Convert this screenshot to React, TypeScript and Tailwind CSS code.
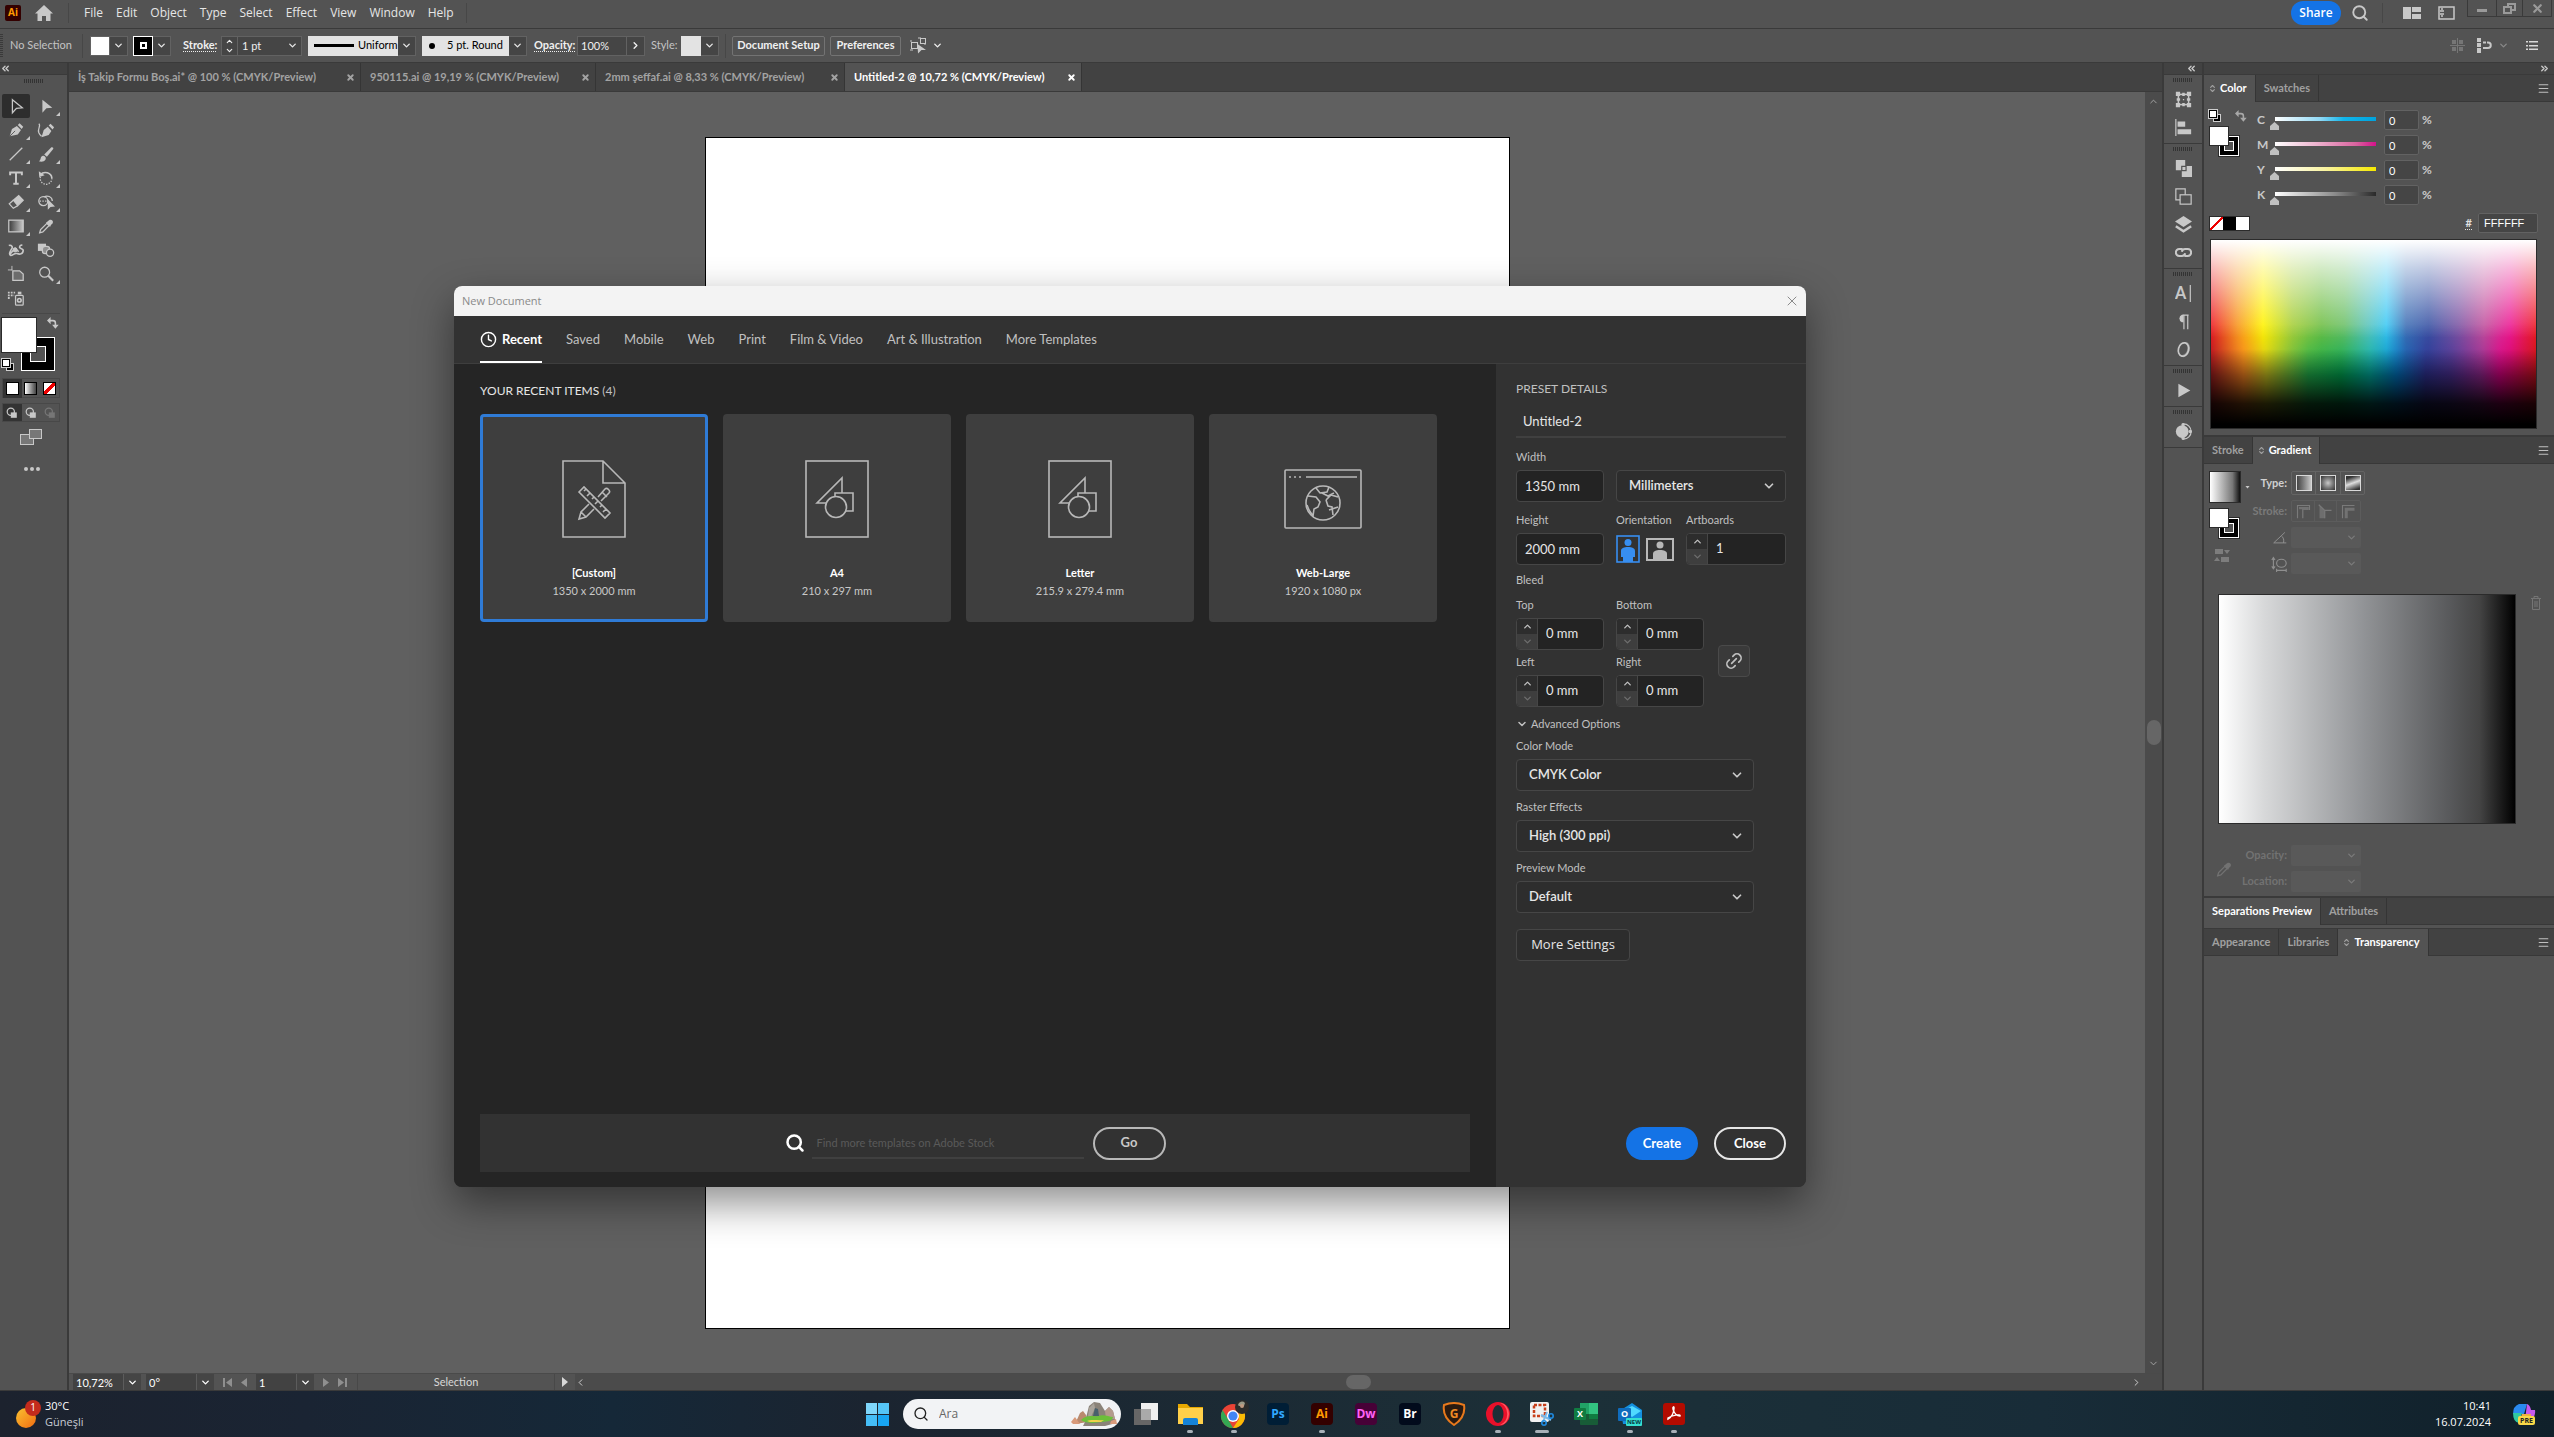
import type { ReactNode } from "react"
import { ChevronDown, ChevronUp, ChevronRight, ChevronLeft, ChevronsLeft, ChevronsRight, ChevronsUpDown, Search, X, Menu, Link2, Clock4 } from "lucide-react"

const menus = ["File", "Edit", "Object", "Type", "Select", "Effect", "View", "Window", "Help"]

const docs = [
  { name: "İş Takip Formu Boş.ai* @ 100 % (CMYK/Preview)", width: "w-[292px]", active: false },
  { name: "950115.ai @ 19,19 % (CMYK/Preview)", width: "w-[235px]", active: false },
  { name: "2mm şeffaf.ai @ 8,33 % (CMYK/Preview)", width: "w-[249px]", active: false },
  { name: "Untitled-2 @ 10,72 % (CMYK/Preview)", width: "w-[237px]", active: true },
]

const presetTabs = ["Saved", "Mobile", "Web", "Print", "Film & Video", "Art & Illustration", "More Templates"]

const presets = [
  { name: "[Custom]", size: "1350 x 2000 mm", kind: "custom" },
  { name: "A4", size: "210 x 297 mm", kind: "art" },
  { name: "Letter", size: "215.9 x 279.4 mm", kind: "art" },
  { name: "Web-Large", size: "1920 x 1080 px", kind: "web" },
]

const channels = [
  { name: "C", track: "bg-[linear-gradient(to_right,#fff,#8fd8f5_45%,#12b5ea_68%,#00a3dd)]" },
  { name: "M", track: "bg-[linear-gradient(to_right,#fff,#eeb5d0_40%,#d9649f_80%,#d3128a)]" },
  { name: "Y", track: "bg-[linear-gradient(to_right,#fff,#f9f3a0_50%,#f5e800)]" },
  { name: "K", track: "bg-[linear-gradient(to_right,#fff,#8a8a8a_60%,#2a2a2a)]" },
]

function Svg({ size = 20, children }: { size?: number; children: ReactNode }) {
  return (
    <svg width={size} height={size} viewBox="0 0 20 20" fill="none" stroke="currentColor" strokeWidth="1.4" aria-hidden="true">
      {children}
    </svg>
  )
}

/* ---------- toolbar ---------- */

const tools: { name: string; more: boolean; icon: ReactNode }[] = [
  { name: "Selection", more: false, icon: <path d="M6 3 L17 12 L10.500 12.500 L6 17.500 Z" /> },
  { name: "Direct Selection", more: true, icon: <path d="M6 3 L17 12 L10.500 12.500 L6 17.500 Z" fill="currentColor" stroke="none" /> },
  { name: "Pen", more: true, icon: <><path d="M3 17 L5.500 9 L11 5.500 L15.500 10 L12 15 Z M12 4.500 L14 2.500 L18 6.500 L16.300 8.800 Z" fill="currentColor" stroke="none" /><path d="M3 17 L9 11" stroke="#535353" strokeWidth="1" /></> },
  { name: "Curvature", more: false, icon: <><path d="M5 18 L7.500 10 L12 6.500 L16 11 L13 15.500 Z M13 5 L15 3 L19 7 L17.300 9.500 Z" fill="currentColor" stroke="none" /><path d="M2 3 C5 5 0 9 2 13 C3 15 4 16 5 17" /></> },
  { name: "Line Segment", more: true, icon: <path d="M3 17 L17 3" /> },
  { name: "Paintbrush", more: true, icon: <><path d="M8 10.500 L16 2.500 C17.500 2 18.500 3 18 4.500 L11 13 Z" fill="currentColor" stroke="none" /><path d="M2 18 C5 17 3 13 6.500 12 C9 12 10.500 14 9.500 16 C8 18.500 5 19 2 18 Z" fill="currentColor" stroke="none" /></> },
  { name: "Type", more: true, icon: <path d="M3.500 7 V4 H16.500 V7 M10 4 V16.500 M7 16.500 H13" strokeWidth="2.200" /> },
  { name: "Rotate", more: true, icon: <><path d="M4 6 C8 2 16 4 16.500 10" strokeWidth="1.800" /><path d="M16.500 10 A6.500 6.500 0 1 1 4 8" strokeDasharray="1.500 1.500" /><path d="M2 2.500 L2.500 9 L8.500 7 Z" fill="currentColor" stroke="none" /></> },
  { name: "Eraser", more: true, icon: <><path d="M7 8 L13 3 L18 8 L12 14 Z" fill="currentColor" /><path d="M7 8 L2.500 12 L7 17 L12 14" /></> },
  { name: "Shape Builder", more: true, icon: <><circle cx="7" cy="9" r="5" /><path d="M8 4.500 C11 2 17 4 17 9" /><path d="M3 9 H12" strokeDasharray="1.500 1.500" /><path d="M12 7 L20 15 L15 15.500 L12 18.500 Z" fill="currentColor" stroke="none" /></> },
  { name: "Gradient", more: true, icon: <><defs><linearGradient id="toolGradient"><stop stopColor="#3a3a3a" /><stop offset="1" stopColor="#c8c8c8" /></linearGradient></defs><rect x="2" y="3.500" width="16" height="13" fill="url(#toolGradient)" /></> },
  { name: "Eyedropper", more: false, icon: <><path d="M3 17.500 L4 14 L11 7 L13.500 9.500 L6.500 16.500 Z" /><path d="M10 6.500 L12 4.800 C14 1.500 19 3 17.500 7 L15.500 9 L14.500 11 Z" fill="currentColor" stroke="none" /></> },
  { name: "Puppet Warp", more: false, icon: <><path d="M2 5 C5 4 7 7 5 9 C3 12 2 15 4 16 C7 16 8 13 11 14 C14 15 18 15 18 10 C17 8 15 9 14 7 C14 5 16 4 17 5 M3 15 L9 8 L13 12" strokeWidth="1.800" /><circle cx="9" cy="10" r="2" fill="currentColor" /></> },
  { name: "Blend", more: false, icon: <><rect x="1" y="3" width="9" height="8" fill="currentColor" stroke="none" /><rect x="6" y="6" width="8" height="8" rx="3" fill="#8f8f8f" /><circle cx="14.500" cy="13" r="4" fill="#535353" /></> },
  { name: "Artboard", more: false, icon: <><path d="M6.500 6.500 H14 L18 10 V17 H6.500 Z" fill="#6c6c6c" /><path d="M1 5.500 H6 M5.500 1 V6" strokeWidth="1" /></> },
  { name: "Zoom", more: true, icon: <><circle cx="8.500" cy="8" r="5.500" /><path d="M12.500 12 L18 17.500" strokeWidth="2.400" /></> },
  { name: "Symbol Sprayer", more: false, icon: <><rect x="9.500" y="7" width="8.500" height="11" rx="1" /><circle cx="13.700" cy="12.500" r="2" strokeWidth="1.800" /><path d="M12 3 H16 V6 H12 Z" fill="currentColor" stroke="none" /><path d="M1 4 H9 M1 7 H8 M1 10 H4" strokeDasharray="2 1.200" strokeWidth="2" /></> },
]

function FillStroke({ big = false }: { big?: boolean }) {
  if (big) {
    return (
      <div className="relative h-[54px] w-[54px]">
        <div className="absolute right-0 bottom-0 size-[34px] border border-white bg-black p-2">
          <div className="size-full border border-white bg-[#535353]" />
        </div>
        <div className="absolute top-0 left-0 size-[36px] border border-[#2b2b2b] bg-white" />
      </div>
    )
  }
  return (
    <div className="relative size-[30px]">
      <div className="absolute right-0 bottom-0 size-5 border border-white bg-black p-1 outline outline-[#2b2b2b]">
        <div className="size-full border border-white bg-[#535353]" />
      </div>
      <div className="absolute top-0 left-0 size-5 border border-[#2b2b2b] bg-white" />
    </div>
  )
}

function DefaultSwatch() {
  return (
    <div className="relative size-3">
      <div className="absolute right-0 bottom-0 size-2 border border-[#cfcfcf] bg-black" />
      <div className="absolute top-0 left-0 size-2 border border-black bg-white outline outline-[#cfcfcf]" />
    </div>
  )
}

function SwapIcon() {
  return (
    <Svg size={12}>
      <path d="M5 6 H10 C13 6 14 8 14 10 V14" strokeWidth="2.600" />
      <path d="M0 6 L6 0 V12 Z M8.500 13 H19.500 L14 19.500 Z" fill="currentColor" stroke="none" />
    </Svg>
  )
}

function Grip() {
  return <div className="mx-auto h-1 w-5 bg-[repeating-linear-gradient(to_right,#333_0_1px,transparent_1px_2px)]" />
}

function Toolbar() {
  return (
    <aside className="flex w-[69px] shrink-0 flex-col border-r-2 border-[#3a3a3a] bg-[#535353] text-[#c8c8c8]">
      <div className="h-3 border-b border-[#3a3a3a] bg-[#424242]">
        <ChevronsLeft size={11} strokeWidth={3} />
      </div>
      <div className="flex h-[19px] items-start pt-1">
        <Grip />
      </div>
      <div className="grid w-[60px] grid-cols-2 gap-x-[2px] pl-[2px]">
        {tools.map((tool, i) => (
          <button key={tool.name} aria-label={tool.name} className={i === 0 ? "relative flex h-6 items-center justify-center rounded-xs bg-[#2d2d2d]" : "relative flex h-6 items-center justify-center"}>
            <Svg size={18}>{tool.icon}</Svg>
            {tool.more && <span className="absolute right-0 bottom-[2px] size-1 bg-[#c8c8c8] [clip-path:polygon(100%_0,100%_100%,0_100%)]" />}
          </button>
        ))}
      </div>
      <div className="mx-[2px] my-[3px] h-px w-[58px] shrink-0 bg-[#484848]" />
      <div className="relative ml-[1px] w-[58px]">
        <FillStroke big />
        <button aria-label="Swap" className="absolute top-0 right-0"><SwapIcon /></button>
        <div className="absolute bottom-0 left-[1px]"><DefaultSwatch /></div>
      </div>
      <div className="mt-[7px] ml-[2px] grid h-5 w-[58px] grid-cols-3 place-items-center border border-[#484848]">
        <span className="size-[13px] border border-black bg-white outline-3 outline-[#333]" />
        <span className="size-[13px] border border-black bg-linear-to-r from-white to-[#444]" />
        <span className="size-[13px] border border-black bg-[linear-gradient(135deg,#fff_40%,#e00_40%_60%,#fff_60%)]" />
      </div>
      <div className="mt-[5px] ml-[2px] grid h-[19px] w-[58px] grid-cols-3 border border-[#484848]">
        {["Draw Normal", "Draw Behind", "Draw Inside"].map((name, i) => (
          <button key={name} aria-label={name} className={i === 0 ? "flex items-center justify-center bg-[#333]" : i === 1 ? "flex items-center justify-center" : "flex items-center justify-center opacity-30"}>
            <Svg size={12}>
              <circle cx="8" cy="8" r="6" strokeWidth="2" />
              <rect x="8" y="9" width="10" height="9" fill="currentColor" stroke="none" />
            </Svg>
          </button>
        ))}
      </div>
      <svg className="mt-[7px] ml-5" width="22" height="17" viewBox="0 0 22 17" fill="#777" stroke="currentColor">
        <rect x="0.500" y="5.500" width="13" height="10" />
        <rect x="9.500" y="0.500" width="12" height="9" />
      </svg>
      <div className="mt-[21px] ml-6 flex gap-[2px]">
        <i className="size-1 rounded-full bg-[#c8c8c8]" />
        <i className="size-1 rounded-full bg-[#c8c8c8]" />
        <i className="size-1 rounded-full bg-[#c8c8c8]" />
      </div>
    </aside>
  )
}

/* ---------- top bars ---------- */

function MenuBar() {
  return (
    <header className="flex h-[29px] shrink-0 items-center border-b border-[#3a3a3a] pb-[2px] font-['Open_Sans',sans-serif] text-xs text-[#e6e6e6]">
      <span className="ml-[5px] flex h-4 w-4 items-center justify-center rounded-xs bg-[#330000] text-[10px] font-bold text-[#ff9a00]">Ai</span>
      <svg className="ml-[14px]" width="18" height="16" viewBox="0 0 18 16" fill="#c8c8c8">
        <path d="M9 0 L18 8.500 H15.500 V16 H11 V11 H7 V16 H2.500 V8.500 H0 Z" />
      </svg>
      <span className="ml-[15px] h-5 w-px bg-[#474747]" />
      <nav className="ml-[15px] flex gap-[13px]">
        {menus.map((m) => (
          <button key={m}>{m}</button>
        ))}
      </nav>
      <span className="ml-3 h-5 w-px bg-[#474747]" />
      <button className="ml-auto h-6 w-[50px] rounded-full bg-[#1473e6] text-xs font-semibold text-white">Share</button>
      <button aria-label="Search" className="ml-[10px] text-[#c8c8c8]"><Search size={18} strokeWidth={2.500} /></button>
      <span className="ml-[13px] h-5 w-px bg-[#474747]" />
      <svg className="ml-5" width="18" height="12" viewBox="0 0 18 12" fill="#c8c8c8">
        <path d="M0 0 H8 V12 H0 Z M9 0 H18 V5 H9 Z M9 7 H18 V12 H9 Z" />
      </svg>
      <svg className="ml-[17px]" width="17" height="14" viewBox="0 0 17 14" fill="none" stroke="#c8c8c8" strokeWidth="1.500">
        <rect x="1" y="1" width="15" height="12" />
        <rect x="3" y="3" width="2" height="7" strokeDasharray="2 1" />
      </svg>
      <div className="mr-[2px] ml-3 flex h-[17px] self-start border border-t-0 border-[#3a3a3a] text-[#9a9a9a]">
        <button aria-label="Minimize" className="flex w-7 items-center justify-center"><span className="mt-1 h-[3px] w-[10px] bg-[#9a9a9a]" /></button>
        <button aria-label="Restore" className="flex w-[27px] items-center justify-center border-x border-[#3a3a3a]">
          <svg width="13" height="11" viewBox="0 0 13 11" fill="none" stroke="#9a9a9a" strokeWidth="2"><path d="M5 4 V1 H12 V7 H8" /><rect x="1" y="4" width="7" height="6" /></svg>
        </button>
        <button aria-label="Quit" className="flex w-7 items-center justify-center"><X size={13} strokeWidth={4} /></button>
      </div>
    </header>
  )
}

function Drop({ label }: { label: string }) {
  return (
    <button aria-label={label} className="flex h-5 w-[18px] items-center justify-center border border-l-0 border-[#626262] bg-[#454545] text-[#e6e6e6]">
      <ChevronDown size={11} strokeWidth={3} />
    </button>
  )
}

function ControlBar() {
  return (
    <div className="flex h-[34px] shrink-0 items-center border-b border-[#3a3a3a] text-[11px] text-[#f0f0f0]">
      <div className="h-6 w-[3px] bg-[repeating-linear-gradient(#3a3a3a_0_1px,transparent_1px_2px)]" />
      <span className="ml-[7px] w-[72px] text-[#c4c4c4]">No Selection</span>
      <span className="h-6 w-px bg-[#474747]" />
      <div className="ml-[7px] flex">
        <span className="size-5 border border-[#626262] bg-white" />
        <Drop label="Fill color" />
      </div>
      <div className="ml-[5px] flex">
        <span className="flex size-5 items-center justify-center border border-white bg-black">
          <span className="size-[7px] border-2 border-white" />
        </span>
        <Drop label="Stroke color" />
      </div>
      <label htmlFor="strokeWeight" className="ml-3 w-[38px] font-bold underline decoration-dotted underline-offset-2">Stroke:</label>
      <div className="flex">
        <div className="flex h-5 w-[17px] flex-col items-center justify-between border border-[#626262] bg-[#454545]">
          <ChevronUp size={9} strokeWidth={3} />
          <ChevronDown size={9} strokeWidth={3} />
        </div>
        <input id="strokeWeight" defaultValue="1 pt" className="h-5 w-[46px] border-y border-[#626262] bg-[#454545] px-1" />
        <Drop label="Stroke weight" />
      </div>
      <div className="ml-[6px] flex text-black">
        <div className="flex h-5 w-[90px] items-center gap-1 bg-[#e3e3e3] pl-[6px]">
          <span className="h-[3px] w-10 shrink-0 bg-black" />
          Uniform
        </div>
        <Drop label="Width profile" />
      </div>
      <div className="ml-[6px] flex text-black">
        <div className="flex h-5 w-[87px] items-center gap-3 bg-[#e3e3e3] pl-[7px]">
          <span className="size-[6px] shrink-0 rounded-full bg-black" />
          5 pt. Round
        </div>
        <Drop label="Brush" />
      </div>
      <label htmlFor="opacity" className="ml-[7px] w-[43px] font-bold underline decoration-dotted underline-offset-2">Opacity:</label>
      <div className="flex">
        <input id="opacity" defaultValue="100%" className="h-5 w-[50px] border border-[#626262] bg-[#454545] px-[3px]" />
        <button aria-label="Opacity slider" className="flex h-5 w-[18px] items-center justify-center border border-l-0 border-[#626262] bg-[#454545]">
          <ChevronRight size={11} strokeWidth={3} />
        </button>
      </div>
      <span className="ml-[6px] w-[30px] text-[#c4c4c4]">Style:</span>
      <div className="flex">
        <span className="size-5 bg-[#e3e3e3]" />
        <Drop label="Graphic style" />
      </div>
      <span className="ml-[6px] h-6 w-px bg-[#474747]" />
      <button className="ml-[6px] h-5 w-[93px] rounded-xs border border-[#737373] font-bold">Document Setup</button>
      <button className="ml-[5px] h-5 w-[71px] rounded-xs border border-[#737373] font-bold">Preferences</button>
      <button aria-label="Select similar" className="ml-[9px] flex items-center gap-[5px]">
        <svg width="17" height="17" viewBox="0 0 17 17" fill="none" stroke="#c8c8c8">
          <rect x="1.500" y="5.500" width="6" height="6" />
          <rect x="10.500" y="1.500" width="5" height="5" />
          <path d="M0 4 H2 M8 1 H11 M15 8 V6 M0 13 H3" />
          <path d="M7.500 7 L16 13 L11.500 13 L8 16.500 Z" fill="#c8c8c8" stroke="none" />
        </svg>
        <ChevronDown size={11} strokeWidth={3} />
      </button>
      <svg className="ml-auto opacity-30" width="15" height="15" viewBox="0 0 15 15" fill="#c8c8c8">
        <path d="M2 2 H6 V6 H2 Z M9 2 H13 V6 H9 Z M2 9 H6 V13 H2 Z M9 9 H13 V13 H9 Z M7 0 H8 V15 H7 Z M0 7 H15 V8 H0 Z" />
      </svg>
      <svg className="ml-3" width="15" height="15" viewBox="0 0 15 15" fill="#c8c8c8">
        <path d="M0 0 H4 V4 H0 Z M0 5 H4 V9 H0 Z M0 10 H4 V15 H0 Z" />
        <path d="M6 4.500 H11 A2.500 2.500 0 0 1 11 10 H6" fill="none" stroke="#c8c8c8" strokeWidth="2" strokeDasharray="3 1 20" />
      </svg>
      <ChevronDown className="ml-[6px] text-[#888]" size={11} strokeWidth={3} />
      <svg className="mr-4 ml-[17px]" width="12" height="9" viewBox="0 0 12 9" fill="#d8d8d8">
        <path d="M0 0 H2 V1.500 H0 Z M3 0 H12 V1.500 H3 Z M0 4 H2 V5.500 H0 Z M3 4 H12 V5.500 H3 Z M0 7.500 H2 V9 H0 Z M3 7.500 H12 V9 H3 Z" />
      </svg>
    </div>
  )
}

/* ---------- document area ---------- */

function DocTabs() {
  return (
    <div className="flex h-[29px] shrink-0 border-b border-[#3a3a3a] bg-[#424242] text-[11px] font-bold">
      {docs.map((d) => (
        <div key={d.name} className={`${d.width} flex items-center justify-between border-r border-[#353535] pr-[5px] pl-[9px] whitespace-nowrap ${d.active ? "bg-[#535353] text-white" : "text-[#a3a3a3]"}`}>
          <button>{d.name}</button>
          <button aria-label={"Close " + d.name}><X size={9} strokeWidth={5} /></button>
        </div>
      ))}
    </div>
  )
}

function StatusSelect({ label, value, width }: { label: string; value: string; width: string }) {
  return (
    <div className="flex h-full">
      <input aria-label={label} defaultValue={value} className={`${width} h-full bg-[#424242] pl-[3px] text-white`} />
      <button aria-label={label + " list"} className="flex w-[18px] items-center justify-center border-l border-[#5c5c5c] bg-[#454545] text-white">
        <ChevronDown size={11} strokeWidth={3} />
      </button>
    </div>
  )
}

function StatusBar() {
  return (
    <div className="flex h-[17px] shrink-0 items-center border-t border-[#4a4a4a] bg-[#4b4b4b] text-[11px] text-[#d8d8d8]">
      <div className="flex h-full w-[506px] items-center bg-[#535353] pl-1">
        <StatusSelect label="Zoom level" value="10,72%" width="w-[50px]" />
        <span className="w-[5px]" />
        <StatusSelect label="Rotate view" value="0°" width="w-[50px]" />
        <div className="flex w-[42px] items-center gap-[9px] pl-[9px] opacity-35">
          <svg width="9" height="9" viewBox="0 0 9 9" fill="white"><path d="M0 0 H2 V9 H0 Z M9 0 V9 L3 4.500 Z" /></svg>
          <svg width="6" height="9" viewBox="0 0 6 9" fill="white"><path d="M6 0 V9 L0 4.500 Z" /></svg>
        </div>
        <StatusSelect label="Artboard number" value="1" width="w-10" />
        <div className="flex w-[43px] items-center gap-[9px] pl-[9px] opacity-35">
          <svg width="6" height="9" viewBox="0 0 6 9" fill="white"><path d="M0 0 V9 L6 4.500 Z" /></svg>
          <svg width="9" height="9" viewBox="0 0 9 9" fill="white"><path d="M7 0 H9 V9 H7 Z M0 0 V9 L6 4.500 Z" /></svg>
        </div>
        <span className="flex-1 border-x border-[#484848] text-center">Selection</span>
        <svg className="mx-[7px]" width="6" height="10" viewBox="0 0 6 10" fill="#d8d8d8"><path d="M0 0 V10 L6 5 Z" /></svg>
      </div>
      <ChevronLeft size={11} strokeWidth={2} />
      <div className="flex flex-1 justify-center"><span className="h-[14px] w-[25px] rounded-full bg-[#666]" /></div>
      <ChevronRight className="mr-5" size={11} strokeWidth={2} />
    </div>
  )
}

function Canvas() {
  return (
    <div className="flex min-h-0 flex-1 bg-[#606060]">
      <div className="flex flex-1 items-center justify-center">
        <div className="h-[1192px] w-[805px] border border-black bg-white" />
      </div>
      <div className="flex w-[17px] flex-col items-center justify-between bg-[#4b4b4b] py-1 text-[#a8a8a8]">
        <ChevronUp size={11} strokeWidth={2} />
        <span className="h-[25px] w-[14px] rounded-full bg-[#666]" />
        <ChevronDown size={11} strokeWidth={2} />
      </div>
    </div>
  )
}

/* ---------- right dock ---------- */

const dockGroups: { name: string; icon: ReactNode }[][] = [
  [
    { name: "Transform", icon: <><rect x="4" y="4" width="12" height="12" strokeWidth="1.800" /><path d="M1 1 h5 v5 h-5 Z M14 1 h5 v5 h-5 Z M1 14 h5 v5 h-5 Z M14 14 h5 v5 h-5 Z M8.500 2 h3 v4 h-3 Z M8.500 14 h3 v4 h-3 Z M2 8.500 h4 v3 h-4 Z M14 8.500 h4 v3 h-4 Z M9.300 9.300 h1.500 v1.500 h-1.500 Z" fill="currentColor" stroke="none" /></> },
    { name: "Align", icon: <><path d="M1 0 V20" /><path d="M3 3 H12 V9 H3 Z M3 12 H19 V18 H3 Z" fill="currentColor" stroke="none" /></> },
  ],
  [
    { name: "Pathfinder", icon: <><path d="M1 0 H12 V7 H8 V12 H1 Z M12 7 H20 V20 H8 V13 H12 Z" fill="currentColor" stroke="none" /><rect x="8" y="7.500" width="5" height="5" stroke="#535353" fill="currentColor" /></> },
    { name: "Artboards", icon: <><path d="M6 14 H1 V1 H12 V8" /><rect x="6" y="8" width="13" height="11" /></> },
    { name: "Layers", icon: <><path d="M10 0 L20 6.500 L10 13 L0 6.500 Z" fill="currentColor" stroke="none" /><path d="M1 12 L10 18 L19 12" strokeWidth="3" /></> },
    { name: "Links", icon: <><path d="M9 6 H5 A4 4 0 0 0 5 14 H8 A4 4 0 0 0 12 11" strokeWidth="2.400" /><path d="M11 14 H15 A4 4 0 0 0 15 6 H12 A4 4 0 0 0 8 9" strokeWidth="2.400" /></> },
  ],
  [
    { name: "Character", icon: <><text x="0" y="17" fontSize="19" fontWeight="bold" fill="currentColor" stroke="none">A</text><path d="M18 0 V20" /></> },
    { name: "Paragraph", icon: <><path d="M10 2 H8 A5 5 0 0 0 8 11 H10 Z" fill="currentColor" stroke="none" /><path d="M9 2.500 H16 M10.500 2 V19 M15 2 V19" /></> },
    { name: "OpenType", icon: <><ellipse cx="10" cy="10" rx="6" ry="8" transform="rotate(15 10 10)" strokeWidth="2" /><path d="M13 2 C19 6 16 16 9 18" strokeWidth="3" opacity="0.400" /></> },
  ],
  [{ name: "Actions", icon: <path d="M4 2 L18 10 L4 18 Z" fill="currentColor" stroke="none" /> }],
  [{ name: "Recolor", icon: <><circle cx="8.500" cy="10" r="7.500" fill="currentColor" stroke="none" /><path d="M10 1 A9 9 0 0 1 10 19" /><circle cx="9.500" cy="2" r="1.300" fill="currentColor" /><circle cx="18" cy="10" r="1.300" fill="currentColor" /><circle cx="9.500" cy="18" r="1.300" fill="currentColor" /></> }],
]

function Dock() {
  return (
    <aside className="flex w-[42px] shrink-0 flex-col border-x-2 border-[#3a3a3a] bg-[#535353] text-[#c8c8c8]">
      <div className="flex h-3 justify-end border-b border-[#3a3a3a] bg-[#424242] pr-[5px]">
        <ChevronsLeft size={11} strokeWidth={3} />
      </div>
      {dockGroups.map((group) => (
        <div key={group[0].name} className="border-b border-[#3a3a3a] pt-[3px] pb-[2px]">
          <Grip />
          <div className="mt-[3px] flex flex-col items-center">
            {group.map((item) => (
              <button key={item.name} aria-label={item.name} className="flex h-7 items-center"><Svg size={17}>{item.icon}</Svg></button>
            ))}
          </div>
        </div>
      ))}
    </aside>
  )
}

/* ---------- panels ---------- */

function PanelTabs({ tabs, active, menu = true, arrows = true }: { tabs: string[]; active: string; menu?: boolean; arrows?: boolean }) {
  return (
    <div className="flex h-[27px] shrink-0 border-b border-[#383838] bg-[#424242] text-[11px] font-bold">
      {tabs.map((t) => (
        <button key={t} className={t === active ? "-mb-px flex items-center gap-[3px] border-r border-[#353535] bg-[#535353] px-2 text-white" : "flex items-center border-r border-[#353535] px-2 text-[#a0a0a0]"}>
          {t === active && arrows && <ChevronsUpDown className="-ml-1 text-[#a0a0a0]" size={9} strokeWidth={3} />}
          {t}
        </button>
      ))}
      {menu && <Menu className="mt-[7px] mr-1 ml-auto text-[#c0c0c0]" size={13} strokeWidth={2} />}
    </div>
  )
}

function ColorPanel() {
  return (
    <section className="h-[335px] shrink-0 border-b-2 border-[#3a3a3a] px-[5px] pt-2">
      <div className="flex">
        <div className="w-12">
          <div className="flex items-center justify-between pr-[10px] text-[#a8a8a8]">
            <DefaultSwatch />
            <SwapIcon />
          </div>
          <div className="mt-1"><FillStroke /></div>
        </div>
        <div className="flex flex-col gap-[5px] text-xs font-bold text-[#c8c8c8]">
          {channels.map((c) => (
            <div key={c.name} className="flex h-5 items-center">
              <label htmlFor={"channel" + c.name} className="w-[13px]">{c.name}</label>
              <input id={"channel" + c.name} type="range" min={0} max={100} defaultValue={0} className={`${c.track} h-[14px] w-[106px] appearance-none bg-[length:calc(100%-5px)_4px] bg-[position:right_top_4px] bg-no-repeat [&::-webkit-slider-thumb]:mt-3 [&::-webkit-slider-thumb]:h-2 [&::-webkit-slider-thumb]:w-[9px] [&::-webkit-slider-thumb]:appearance-none [&::-webkit-slider-thumb]:bg-[#c0c0c0] [&::-webkit-slider-thumb]:[clip-path:polygon(50%_0,100%_50%,100%_100%,0_100%,0_50%)]`} />
              <input aria-label={c.name + " value"} defaultValue="0" className="ml-2 h-5 w-[35px] rounded-xs border border-[#626262] bg-[#454545] px-1 text-[11px] font-normal text-white" />
              <span className="ml-[3px]">%</span>
            </div>
          ))}
        </div>
      </div>
      <div className="mt-2 flex items-center">
        <div className="flex border border-[#2b2b2b]">
          <span className="h-[13px] w-[13px] bg-[linear-gradient(135deg,#fff_43%,#e00_43%_57%,#fff_57%)]" />
          <span className="h-[13px] w-[13px] bg-black" />
          <span className="h-[13px] w-[13px] bg-white" />
        </div>
        <label htmlFor="hex" className="ml-auto text-[11px] font-bold text-[#e0e0e0] underline decoration-dotted underline-offset-2">#</label>
        <input id="hex" defaultValue="FFFFFF" className="mr-[11px] ml-[6px] h-5 w-[60px] rounded-xs border border-[#626262] bg-[#454545] px-[5px] font-['Liberation_Sans',sans-serif] text-[11px] text-white" />
      </div>
      <div className="relative mt-[6px] mr-3 ml-px h-[190px] border border-[#2b2b2b] bg-[linear-gradient(to_right,#ed1c24,#f7941d_8%,#fff200_16%,#a6ce39_25%,#6fbe44_34%,#6cc067_41%,#5cc4b8_48%,#3cc8f4_54%,#3f6fb5_60%,#3a53a4_67%,#7b55a3_76%,#c0509d_84%,#ec1b93_92%,#ed1c24)]">
        <div className="absolute inset-0 bg-[linear-gradient(to_right,#9a1c1f,#f58220_10%,#c8c020_17%,#22b14c_30%,#00a651_40%,#00a99d_49%,#0072bc_57%,#2e3192_66%,#4b2f91_74%,#92278f_83%,#d4007f_89%,#c1121c)] [mask-image:linear-gradient(transparent_45%,black_72%)]" />
        <div className="absolute inset-0 bg-[linear-gradient(#fff,#ffffffb0_15%,#ffffff60_32%,#fff0_52%,#0000_58%,#0008_76%,#000d_87%,#000_98%)]" />
      </div>
    </section>
  )
}

function DimSelect({ label }: { label: string }) {
  return (
    <div className="relative">
      <select aria-label={label} disabled className="block h-[21px] w-[70px] appearance-none rounded-xs bg-[#595959]" />
      <ChevronDown className="absolute top-[5px] right-1 text-[#7a7a7a]" size={11} strokeWidth={3} />
    </div>
  )
}

function GradientPanel() {
  return (
    <section className="flex h-[434px] shrink-0 flex-col border-b-2 border-[#3a3a3a] px-[5px] pt-[7px] text-[11px] font-bold">
      <div className="flex">
        <div className="w-10">
          <div className="flex items-center gap-1">
            <span className="size-8 shrink-0 border border-[#2b2b2b] bg-[linear-gradient(to_right,#fff,#777_75%,#111)]" />
            <span className="h-[3px] w-[5px] shrink-0 bg-[#c8c8c8] [clip-path:polygon(0_0,100%_0,50%_100%)]" />
          </div>
          <div className="mt-[5px]"><FillStroke /></div>
          <svg className="mt-[10px] ml-[5px] opacity-50" width="16" height="16" viewBox="0 0 16 16" fill="#a8a8a8">
            <path d="M1 1 H9 V6 H1 Z M10 2 H16 L13 6 Z M7 9 H15 V14 H7 Z M0 13 H6 L3 9 Z" />
          </svg>
        </div>
        <div className="flex flex-col gap-[5px]">
          <div className="flex items-center">
            <span className="w-[42px] pr-[4px] text-right text-[#d0d0d0]">Type:</span>
            <div className="flex h-6 divide-x divide-[#646464] rounded-xs border border-[#646464]">
              <button aria-label="Linear" className="flex w-6 items-center justify-center"><span className="size-4 border border-[#d8d8d8] bg-linear-to-r from-[#444] to-[#c8c8c8]" /></button>
              <button aria-label="Radial" className="flex w-[25px] items-center justify-center"><span className="size-4 border border-[#d8d8d8] bg-radial from-[#c8c8c8] to-[#333]" /></button>
              <button aria-label="Freeform" className="flex w-[23px] items-center justify-center"><span className="size-4 border border-[#d8d8d8] bg-[linear-gradient(160deg,#333_15%,#ddd_50%,#333_90%)]" /></button>
            </div>
          </div>
          <div className="flex items-center">
            <span className="w-[42px] pr-[4px] text-right text-[#7a7a7a]">Stroke:</span>
            <div className="flex h-[22px] divide-x divide-[#5c5c5c] rounded-xs border border-[#5c5c5c] text-[#7a7a7a]">
              <button aria-label="Within stroke" className="flex w-[23px] items-center justify-center">
                <Svg size={15}><path d="M2 19 V2 H18 V8" strokeWidth="1.500" /><path d="M4 4 H17 V8 H10 V19 H8 V7 H4 Z" fill="currentColor" stroke="none" opacity="0.800" /></Svg>
              </button>
              <button aria-label="Along stroke" className="flex w-[22px] items-center justify-center">
                <Svg size={15}><path d="M2 2 L9 9 V19 H2 Z" fill="currentColor" stroke="none" opacity="0.700" /><path d="M1 1 L9 8.500 H18 M9 8.500 V19" strokeWidth="1.500" /></Svg>
              </button>
              <button aria-label="Across stroke" className="flex w-[23px] items-center justify-center">
                <Svg size={15}><path d="M2 19 V2 H18" strokeWidth="1.500" /><path d="M5 19 V5 H18 V9 H9 V19 Z" fill="currentColor" stroke="none" opacity="0.800" /></Svg>
              </button>
            </div>
          </div>
          <div className="flex items-center text-[#8f8f8f]">
            <span className="flex w-[42px] justify-end pr-[4px]"><Svg size={14}><path d="M17 2 L1 17 H19 M12 7 C15 9 16 13 15 17" /></Svg></span>
            <DimSelect label="Angle" />
          </div>
          <div className="flex items-center text-[#8f8f8f]">
            <span className="flex w-[42px] justify-end pr-[4px]"><Svg size={16}><path d="M3 3 V15 M1 5 L3 2 L5 5 M1 13 L3 16 L5 13 M7 18 H19 M7 16 V20 M19 16 V20" /><ellipse cx="13" cy="9" rx="6" ry="5" /></Svg></span>
            <DimSelect label="Aspect ratio" />
          </div>
        </div>
      </div>
      <div className="mt-5 flex">
        <div className="mr-[15px] ml-[9px] h-[230px] flex-1 border border-[#2b2b2b] bg-[linear-gradient(to_right,#fff,#d8d9da_15%,#939598_48%,#58595b_78%,#444_88%,#000)]" />
        <svg className="mt-[2px] mr-[8px] opacity-40" width="10" height="14" viewBox="0 0 10 14" fill="none" stroke="#a8a8a8"><path d="M0 2.500 H10 M3 2 V0.500 H7 V2 M1.500 3 V13.500 H8.500 V3 M4 5 V11 M6 5 V11" /></svg>
      </div>
      <div className="mt-[21px] flex items-center text-[#727272]">
        <span className="ml-[6px] w-[18px]"><Svg size={18}>{tools[11].icon}</Svg></span>
        <div className="flex flex-col gap-[5px]">
          <div className="flex items-center"><span className="w-[58px] pr-[4px] text-right">Opacity:</span><DimSelect label="Stop opacity" /></div>
          <div className="flex items-center"><span className="w-[58px] pr-[4px] text-right">Location:</span><DimSelect label="Stop location" /></div>
        </div>
      </div>
    </section>
  )
}

function Panels() {
  return (
    <aside className="flex w-[350px] shrink-0 flex-col bg-[#535353]">
      <div className="flex h-3 shrink-0 justify-end border-b border-[#3a3a3a] bg-[#424242] pr-1 text-[#c8c8c8]">
        <ChevronsRight size={11} strokeWidth={3} />
      </div>
      <PanelTabs tabs={["Color", "Swatches"]} active="Color" />
      <ColorPanel />
      <PanelTabs tabs={["Stroke", "Gradient"]} active="Gradient" />
      <GradientPanel />
      <PanelTabs tabs={["Separations Preview", "Attributes"]} active="Separations Preview" menu={false} arrows={false} />
      <div className="h-1 shrink-0 border-b border-[#3a3a3a]" />
      <PanelTabs tabs={["Appearance", "Libraries", "Transparency"]} active="Transparency" />
    </aside>
  )
}

/* ---------- new document dialog ---------- */

function PresetIcon({ kind }: { kind: string }) {
  if (kind === "custom") {
    return (
      <svg width="64" height="78" viewBox="0 0 64 78" fill="none" stroke="#b8b8b8" strokeWidth="1.600">
        <path d="M1 1 H41 L63 23 V77 H1 Z M41 1 V23 H63" />
        <path d="M17 32 L22 27 L48 53 L43 58 Z M24 29 L22 31 M28 33 L25 36 M32 37 L30 39 M36 41 L33 44 M40 45 L38 47 M44 49 L41 52" />
        <path d="M36 37 L43 29 C45 27 49 31 47 33 L39 41 M32 49 L24 57 L17 59 L19 52 L27 44 M19 52 L24 57 M40 32 L45 37" />
      </svg>
    )
  }
  if (kind === "art") {
    return (
      <svg width="64" height="78" viewBox="0 0 64 78" fill="none" stroke="#b8b8b8" strokeWidth="1.600">
        <rect x="1" y="1" width="62" height="76" />
        <path d="M22 43 H12 L37 18 V33 M30 36 V33 H48 V51 H41" />
        <circle cx="31" cy="47" r="10.500" />
      </svg>
    )
  }
  return (
    <svg width="78" height="60" viewBox="0 0 78 60" fill="none" stroke="#b8b8b8" strokeWidth="1.600">
      <rect x="1" y="1" width="76" height="58" rx="1" />
      <path d="M5 8 H7 M10 8 H12 M15 8 H17 M22 8 H73" />
      <circle cx="39" cy="34" r="17" />
      <path d="M24 27 L32 28 L36 33 L34 38 L30 40 L29 47 L25 41 L23 36 M32 19 L36 24 L43 23 L45 18 M42 31 L47 26 L54 28 M42 31 L44 37 L48 38 L49 46 M45 41 L54 38 M38 24 L44 27 L50 24" />
    </svg>
  )
}

function Stepper({ id, value }: { id: string; value: string }) {
  return (
    <div className="flex h-8 w-full overflow-hidden rounded border border-[#464646] bg-[#232323]">
      <div className="flex w-[21px] shrink-0 flex-col border-r border-[#464646] text-[#c0c0c0]">
        <button aria-label="Increase" className="flex flex-1 items-center justify-center bg-[#2d2d2d]"><ChevronUp size={11} strokeWidth={3} /></button>
        <button aria-label="Decrease" className="flex flex-1 items-center justify-center bg-[#3e3e3e] text-[#6e6e6e]"><ChevronDown size={11} strokeWidth={3} /></button>
      </div>
      <input id={id} defaultValue={value} className="w-full min-w-0 bg-transparent pl-2 text-[13px] text-[#e6e6e6]" />
    </div>
  )
}

function Field({ id, label, className, children }: { id: string; label: string; className: string; children: ReactNode }) {
  return (
    <div className={`${className} flex flex-col gap-[6px]`}>
      <label htmlFor={id} className="text-[11px] leading-[14px] text-[#c0c0c0]">{label}</label>
      {children}
    </div>
  )
}

function Select({ id, value, label }: { id: string; value: string; label?: string }) {
  return (
    <div className="relative">
      <select id={id} aria-label={label} className="block h-8 w-full appearance-none rounded border border-[#464646] bg-[#2d2d2d] pl-3 text-[13px] font-semibold text-[#e6e6e6]">
        <option>{value}</option>
      </select>
      <ChevronDown className="absolute top-[9px] right-[10px] text-[#c8c8c8]" size={14} strokeWidth={3} />
    </div>
  )
}

function PresetDetails() {
  return (
    <div className="flex w-[310px] shrink-0 flex-col bg-[#323232] px-5 pt-[18px] pb-[27px]">
      <h3 className="text-xs leading-[14px] text-[#c0c0c0]">PRESET DETAILS</h3>
      <input aria-label="Document name" defaultValue="Untitled-2" className="mt-[10px] h-8 w-full border-b-2 border-[#404040] bg-transparent pl-[7px] text-[13px] text-[#e6e6e6]" />
      <div className="mt-3 flex items-end gap-3">
        <Field id="width" label="Width" className="w-[88px]">
          <input id="width" defaultValue="1350 mm" className="h-8 w-full rounded border border-[#464646] bg-[#232323] pl-2 text-[13px] text-[#e6e6e6]" />
        </Field>
        <div className="flex-1">
          <Select id="units" label="Units" value="Millimeters" />
        </div>
      </div>
      <div className="mt-[11px] flex items-end gap-3">
        <Field id="height" label="Height" className="w-[88px]">
          <input id="height" defaultValue="2000 mm" className="h-8 w-full rounded border border-[#464646] bg-[#232323] pl-2 text-[13px] text-[#e6e6e6]" />
        </Field>
        <div className="flex w-[58px] flex-col gap-[6px]">
          <span className="text-[11px] leading-[14px] text-[#c0c0c0]">Orientation</span>
          <div className="flex h-8 items-center gap-[6px]">
            <button aria-label="Portrait">
              <svg width="24" height="28" viewBox="0 0 24 28" fill="#378ef0">
                <rect x="1" y="1" width="22" height="26" fill="none" stroke="#378ef0" strokeWidth="1.600" />
                <circle cx="12" cy="7.500" r="3.500" />
                <path d="M5 16 C5 13 8 12 12 12 C16 12 19 13 19 16 V22 H17 V27 H7 V22 H5 Z" />
              </svg>
            </button>
            <button aria-label="Landscape">
              <svg width="28" height="23" viewBox="0 0 28 23" fill="#b8b8b8">
                <rect x="1" y="1" width="26" height="21" fill="none" stroke="#b8b8b8" strokeWidth="2" />
                <circle cx="14" cy="7" r="3.500" />
                <path d="M7 16 C7 13 10 12 14 12 C18 12 21 13 21 16 V22 H7 Z" />
              </svg>
            </button>
          </div>
        </div>
        <Field id="artboards" label="Artboards" className="flex-1">
          <Stepper id="artboards" value="1" />
        </Field>
      </div>
      <span className="mt-2 text-[11px] leading-[14px] text-[#c0c0c0]">Bleed</span>
      <div className="mt-[11px] flex items-center gap-[14px]">
        <div className="grid grid-cols-2 gap-x-3 gap-y-[5px]">
          <Field id="bleedTop" label="Top" className="w-[88px]"><Stepper id="bleedTop" value="0 mm" /></Field>
          <Field id="bleedBottom" label="Bottom" className="w-[88px]"><Stepper id="bleedBottom" value="0 mm" /></Field>
          <Field id="bleedLeft" label="Left" className="w-[88px]"><Stepper id="bleedLeft" value="0 mm" /></Field>
          <Field id="bleedRight" label="Right" className="w-[88px]"><Stepper id="bleedRight" value="0 mm" /></Field>
        </div>
        <button aria-label="Link bleed values" className="mt-4 flex size-8 items-center justify-center rounded border border-[#4a4a4a] bg-[#3a3a3a] text-[#c0c0c0]">
          <Link2 className="-rotate-45" size={20} strokeWidth={2} />
        </button>
      </div>
      <button className="mt-[10px] flex items-center gap-[3px] text-[11px] leading-[14px] text-[#c0c0c0]">
        <ChevronDown size={12} strokeWidth={3} />
        Advanced Options
      </button>
      <div className="mt-2 flex w-[238px] flex-col gap-[9px]">
        <Field id="colorMode" label="Color Mode" className="w-full"><Select id="colorMode" value="CMYK Color" /></Field>
        <Field id="raster" label="Raster Effects" className="w-full"><Select id="raster" value="High (300 ppi)" /></Field>
        <Field id="preview" label="Preview Mode" className="w-full"><Select id="preview" value="Default" /></Field>
      </div>
      <button className="mt-4 h-8 w-[114px] rounded border border-[#464646] bg-[#2d2d2d] font-['Open_Sans',sans-serif] text-[13px] text-[#e6e6e6]">More Settings</button>
      <div className="mt-auto flex justify-end gap-4 text-[13px] font-bold text-white">
        <button className="h-[33px] w-[72px] rounded-full bg-[#1473e6]">Create</button>
        <button className="h-[33px] w-[72px] rounded-full border-2 border-[#e6e6e6]">Close</button>
      </div>
    </div>
  )
}

function NewDocument() {
  return (
    <div role="dialog" aria-label="New Document" className="absolute top-[286px] left-[454px] flex h-[901px] w-[1352px] flex-col overflow-hidden rounded-lg bg-[#323232] shadow-[0_16px_40px_rgba(0,0,0,0.45)]">
      <div className="flex h-[30px] shrink-0 items-center justify-between bg-[#f3f3f3] pr-[6px] pl-2 font-['Open_Sans',sans-serif] text-[11px] text-[#8a8a8a]">
        New Document
        <button aria-label="Dismiss"><X size={16} strokeWidth={1.500} /></button>
      </div>
      <div className="flex h-12 shrink-0 gap-6 border-b border-[#3e3e3e] pl-[26px] text-[13px] text-[#c0c0c0]">
        <button className="flex items-center gap-[5px] border-b-2 border-white pt-[2px] font-bold text-white"><Clock4 size={17} strokeWidth={2} />Recent</button>
        {presetTabs.map((t) => (
          <button key={t}>{t}</button>
        ))}
      </div>
      <div className="flex min-h-0 flex-1">
        <div className="flex flex-1 flex-col bg-[#252525] px-[26px] pt-[19px] pb-[15px]">
          <h2 className="text-xs leading-4 text-[#e6e6e6]">YOUR RECENT ITEMS <span className="text-[#c0c0c0]">(4)</span></h2>
          <div className="mt-[15px] flex gap-[15px]">
            {presets.map((p, i) => (
              <button key={p.name} className={`flex h-[208px] w-[228px] flex-col items-center rounded border-3 bg-[#3e3e3e] ${i === 0 ? "border-[#2f7bd6]" : "border-[#3e3e3e]"}`}>
                <span className="mt-[43px] flex h-[78px] items-center"><PresetIcon kind={p.kind} /></span>
                <span className="mt-[26px] text-[11px] leading-[18px] font-bold text-white">{p.name}</span>
                <span className="text-[11px] leading-[18px] text-[#c8c8c8]">{p.size}</span>
              </button>
            ))}
          </div>
          <div className="mt-auto flex h-[58px] items-center justify-center bg-[#323232]">
            <Search className="text-white" size={20} strokeWidth={3} />
            <input aria-label="Find more templates" placeholder="Find more templates on Adobe Stock" className="ml-[7px] h-8 w-[272px] border-b-2 border-[#404040] bg-transparent pl-[5px] text-[11px] placeholder:text-[#5a5a5a]" />
            <button className="ml-[9px] h-[33px] w-[73px] rounded-full border-2 border-[#b8b8b8] text-[13px] font-bold text-[#c8c8c8]">Go</button>
          </div>
        </div>
        <PresetDetails />
      </div>
    </div>
  )
}

/* ---------- taskbar ---------- */

function TaskIcon({ name, open = false, wide = false, children }: { name: string; open?: boolean; wide?: boolean; children: ReactNode }) {
  return (
    <button aria-label={name} className="relative flex h-full w-11 items-center justify-center">
      {children}
      {open && <span className={wide ? "absolute bottom-1 h-[3px] w-[14px] rounded-full bg-[#a8b0b8]" : "absolute bottom-1 h-[3px] w-[6px] rounded-full bg-[#a8b0b8]"} />}
    </button>
  )
}

function AppTile({ text, colors }: { text: string; colors: string }) {
  return <span className={`${colors} flex size-[22px] items-center justify-center rounded-sm text-xs font-bold`}>{text}</span>
}

function Taskbar() {
  return (
    <footer className="grid h-[46px] shrink-0 grid-cols-[1fr_auto_1fr] items-center bg-[linear-gradient(to_right,#1c222e,#1a2433_12%,#152838_24%,#1b2430_34%,#1c3038_62%,#182c38_80%,#10202a)] font-['Open_Sans',sans-serif] text-xs text-white">
      <div className="flex items-center">
        <div className="relative ml-4 h-7 w-[25px]">
          <span className="absolute bottom-0 left-0 size-5 rounded-full bg-linear-to-br from-[#f8c030] to-[#f06a10]" />
          <span className="absolute top-0 right-0 flex size-4 items-center justify-center rounded-full bg-[#c42b1c] text-[10px]">1</span>
        </div>
        <div className="ml-1 text-[11px] leading-4">
          <div>30°C</div>
          <div className="text-[#c8ccd4]">Güneşli</div>
        </div>
      </div>
      <div className="flex h-full items-center pl-2">
        <button aria-label="Start" className="mr-[14px] grid grid-cols-2 gap-px">
          <i className="size-[11px] bg-[#7fd6fa]" />
          <i className="size-[11px] bg-[#55c5f7]" />
          <i className="size-[11px] bg-[#45bdf6]" />
          <i className="size-[11px] bg-[#18a5f2]" />
        </button>
        <div className="mr-[3px] flex h-[30px] w-[218px] items-center rounded-full bg-[#f2f3f5] pl-[10px]">
          <Search className="shrink-0 text-[#222]" size={16} strokeWidth={2} />
          <input aria-label="Ara" placeholder="Ara" className="ml-[10px] w-full min-w-0 bg-transparent text-xs text-[#333] placeholder:text-[#666]" />
          <svg className="mr-1 shrink-0" width="46" height="24" viewBox="0 0 46 24">
            <path d="M4 22 L9 11 L12 9 L15 13 L17 20 Z" fill="#b98a6e" />
            <path d="M14 20 L18 4 L23 0 L29 1 L34 9 L38 5 L42 9 L45 21 L34 24 H12 Z" fill="#8b8379" />
            <path d="M18 6 L23 1 L24 6 L20 15 H17 Z" fill="#a9a39a" />
            <path d="M34 9 L38 5 L42 9 L44 17 H35 Z" fill="#b49a8c" />
            <path d="M10 18 C17 12 22 15 27 14 C33 12 38 15 42 15 C41 20 36 19 31 20 C24 21 16 22 10 18 Z" fill="#6cbf3a" />
            <path d="M16 19 C21 17 28 19 33 18 L30 20 H19 Z" fill="#f0d24a" />
            <path d="M22 14 L24 6 L27 7 L28 14 Z" fill="#48606c" />
            <path d="M0 20 L4 15 L9 22 H2 Z M40 19 L45 17 L46 22 H39 Z" fill="#d89a7a" />
          </svg>
        </div>
        <TaskIcon name="Task view">
          <svg width="25" height="22" viewBox="0 0 25 22"><rect x="7" y="0" width="17" height="17" fill="#f0f0f0" /><rect x="0" y="6" width="17" height="16" fill="#666" /><rect x="7" y="6" width="10" height="11" fill="#aaa" /></svg>
        </TaskIcon>
        <TaskIcon name="Explorer" open>
          <svg width="25" height="22" viewBox="0 0 25 22"><path d="M0 1 H9 L12 4 H25 V21 H0 Z" fill="#e8a800" /><path d="M0 5 H25 V21 H0 Z" fill="#ffd04a" /><path d="M5 22 V17 Q5 15 7 15 H18 Q20 15 20 17 V22 Z" fill="#1583d8" /></svg>
        </TaskIcon>
        <TaskIcon name="Chrome" open>
          <svg width="30" height="30" viewBox="0 0 30 30">
            <circle cx="14" cy="17" r="12" fill="#ea4335" />
            <path d="M3.600 11 L9 20 L14 29 A12 12 0 0 1 3.600 11" fill="#34a853" />
            <path d="M14 29 L20 20 V11 H24.400 A12 12 0 0 1 14 29" fill="#fbbc05" />
            <circle cx="14" cy="17" r="6" fill="#fff" />
            <circle cx="14" cy="17" r="4.600" fill="#4285f4" />
            <circle cx="23" cy="8" r="7" fill="#2c2c2a" />
            <path d="M19 6 A4 4 0 0 1 26 4 L25 7 H20 Z" fill="#9a9a88" />
            <circle cx="23" cy="7" r="2" fill="#c09a80" />
          </svg>
        </TaskIcon>
        <TaskIcon name="Photoshop"><AppTile text="Ps" colors="bg-[#001e36] text-[#31a8ff]" /></TaskIcon>
        <TaskIcon name="Illustrator" open><AppTile text="Ai" colors="bg-[#330000] text-[#ff9a00]" /></TaskIcon>
        <TaskIcon name="Dreamweaver"><AppTile text="Dw" colors="bg-[#470137] text-[#ff61f6]" /></TaskIcon>
        <TaskIcon name="Bridge"><AppTile text="Br" colors="bg-[#020b1c] text-white" /></TaskIcon>
        <TaskIcon name="G">
          <span className="relative flex h-6 w-6 items-center justify-center">
            <svg className="absolute inset-0" width="24" height="24" viewBox="0 0 24 24"><path d="M2 3 Q12 -1 22 3 Q24 15 12 23 Q0 15 2 3 Z" fill="#2a1a10" stroke="#e8791c" strokeWidth="2" /></svg>
            <b className="relative text-xs leading-3 text-[#f08a24]">G</b>
          </span>
        </TaskIcon>
        <TaskIcon name="Opera" open>
          <svg width="24" height="24" viewBox="0 0 24 24"><path fillRule="evenodd" d="M12 0 A12 12 0 1 0 12 24 A12 12 0 1 0 12 0 M12 3 A5.500 9 0 1 1 12 21 A5.500 9 0 1 1 12 3" fill="#e8102a" /><path d="M14 1 A12 12 0 0 1 14 23 A9 11 0 0 0 14 1" fill="#ff5a62" /></svg>
        </TaskIcon>
        <TaskIcon name="Snipping tool" open wide>
          <svg width="24" height="24" viewBox="0 0 24 24"><rect x="0" y="0" width="19" height="20" rx="2" fill="#f2f2f2" /><rect x="4" y="3" width="11" height="11" fill="none" stroke="#c8401c" strokeWidth="2.500" strokeDasharray="3 1.500" /><path d="M13 20 L17 10 M21 18 L11 13" stroke="#7ab8e8" strokeWidth="2" /><circle cx="14" cy="21" r="2.200" fill="none" stroke="#1f8ae0" strokeWidth="1.600" /><circle cx="21" cy="14" r="2.200" fill="none" stroke="#1f8ae0" strokeWidth="1.600" /></svg>
        </TaskIcon>
        <TaskIcon name="Excel">
          <span className="relative flex h-6 w-6 items-center">
            <svg className="absolute inset-0" width="24" height="24" viewBox="0 0 24 24"><rect x="6" y="1" width="18" height="22" rx="1" fill="#185c37" /><path d="M6 1 H15 V12 H6 Z" fill="#21a366" /><path d="M15 1 H24 V12 H15 Z" fill="#33c481" /><path d="M15 12 H24 V17 H15 Z" fill="#107c41" /><rect x="0" y="6" width="12" height="12" rx="1" fill="#107c41" /></svg>
            <b className="relative ml-[3px] text-[9px]">X</b>
          </span>
        </TaskIcon>
        <TaskIcon name="Outlook" open>
          <span className="relative flex h-6 w-6 items-center">
            <svg className="absolute inset-0" width="24" height="24" viewBox="0 0 24 24"><path d="M3 8 L14 1 L24 8 V22 H5 Z" fill="#1490df" /><path d="M5 9 L14 4 L23 9 L14 15 Z" fill="#50d9ff" /><rect x="0" y="6" width="13" height="13" rx="1" fill="#0f6cbd" /><rect x="8" y="16" width="16" height="8" rx="1" fill="#35e0d0" /></svg>
            <b className="absolute top-[6px] left-[3px] text-[9px] leading-3">O</b>
            <b className="absolute right-px bottom-0 text-[6px] leading-2 text-[#063a44]">NEW</b>
          </span>
        </TaskIcon>
        <TaskIcon name="Acrobat" open>
          <svg width="22" height="22" viewBox="0 0 22 22"><rect width="22" height="22" rx="3" fill="#b30b00" /><path d="M5 16 C9 14 11 9 11 5 C11 3 9.500 4 10 6 C11 10 14 13 17 13 C18 11 9 12 5 15 Z" fill="none" stroke="#fff" strokeWidth="1.500" /></svg>
        </TaskIcon>
      </div>
      <div className="flex items-center justify-end">
        <div className="text-right text-[11px] leading-4">
          <div>10:41</div>
          <div>16.07.2024</div>
        </div>
        <svg className="mr-[18px] ml-5" width="25" height="25" viewBox="0 0 25 25">
          <path d="M8 2 H16 L13 12 H2 Q2 4 8 2 Z" fill="#2a8af0" />
          <path d="M16 2 Q19 3 20 8 H24 Q25 12 21 18 H14 Z" fill="#c85af0" />
          <path d="M2 11 H11 L8 21 Q2 20 2 11 Z" fill="#30c8a0" />
          <path d="M8 21 L11 12 H20 L18 22 Z" fill="#f0b040" />
          <rect x="7" y="14" width="17" height="9" rx="2" fill="#f8d848" />
          <text x="9" y="21" fontSize="7" fontWeight="bold" fill="#222">PRE</text>
        </svg>
      </div>
    </footer>
  )
}

function App() {
  return (
    <div className="relative flex h-screen w-full flex-col overflow-hidden bg-[#535353] font-['Lato',sans-serif]">
      <MenuBar />
      <ControlBar />
      <main className="flex min-h-0 flex-1 border-b border-[#3a3a3a]">
        <Toolbar />
        <div className="flex min-w-0 flex-1 flex-col">
          <DocTabs />
          <Canvas />
          <StatusBar />
        </div>
        <Dock />
        <Panels />
      </main>
      <Taskbar />
      <NewDocument />
    </div>
  )
}

export default App
